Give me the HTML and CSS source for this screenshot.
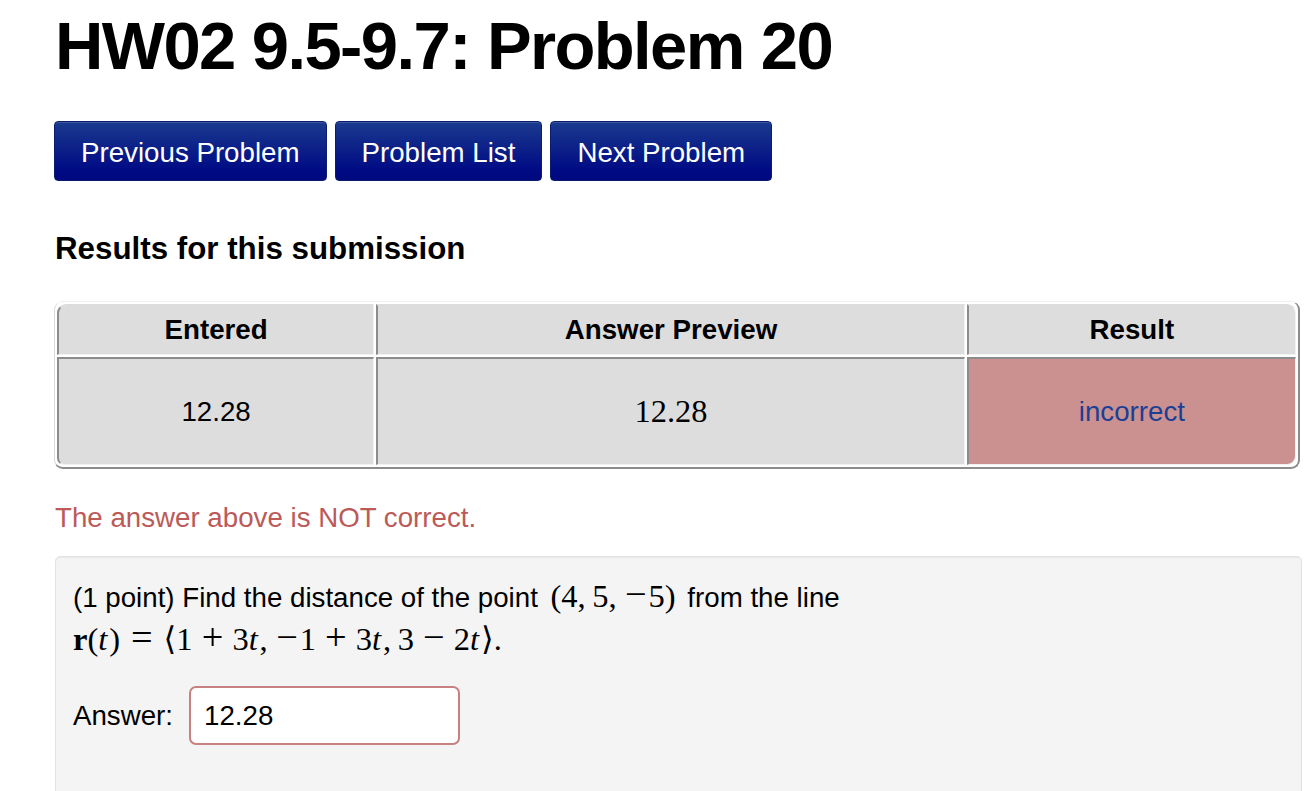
FILE: index.html
```html
<!DOCTYPE html>
<html lang="en">
<head>
<meta charset="utf-8">
<title>HW02 9.5-9.7: Problem 20</title>
<link rel="stylesheet" href="styles.css">
</head>
<body>
<div class="page">
  <h1 class="title">HW02 9.5-9.7: Problem 20</h1>
  <div class="nav">
    <a class="btn btn-prev">Previous Problem</a>
    <a class="btn btn-list">Problem List</a>
    <a class="btn btn-next">Next Problem</a>
  </div>
  <h2 class="results-heading">Results for this submission</h2>
  <table class="results">
    <colgroup>
      <col class="col-entered">
      <col class="col-preview">
      <col class="col-result">
    </colgroup>
    <tr class="head-row">
      <th class="cell first">Entered</th>
      <th class="cell">Answer Preview</th>
      <th class="cell last">Result</th>
    </tr>
    <tr class="data-row">
      <td class="cell first-bottom">12.28</td>
      <td class="cell preview">12.28</td>
      <td class="cell incorrect last-bottom">incorrect</td>
    </tr>
  </table>
  <p class="error-msg">The answer above is NOT correct.</p>
  <div class="problem">
    <p class="statement">(1 point) Find the distance of the point <span class="math inline-math">(4,<span class="thin"></span>5,<span class="thin"></span><span class="op">−</span>5)</span> from the line<br><span class="math"><b>r</b>(<i>t</i>)<span class="op rel">=</span>⟨1<span class="op bin">+</span>3<i>t</i>,<span class="thin"></span><span class="op">−</span>1<span class="op bin">+</span>3<i>t</i>,<span class="thin"></span>3<span class="op bin">−</span>2<i>t</i>⟩.</span></p>
    <div class="answer-row">
      <label class="answer-label">Answer:</label>
      <div class="answer-input">12.28</div>
    </div>
  </div>
</div>
</body>
</html>
```

FILE: styles.css
```css
html, body {
  margin: 0;
  padding: 0;
  background: #ffffff;
}

body {
  font-family: "Liberation Sans", Arial, sans-serif;
  font-size: 27.7px;
  color: #000;
}

.page {
  padding: 0 3px 0 55px;
}

.title {
  margin: 12px 0 0;
  font-size: 67px;
  line-height: 67px;
  letter-spacing: -1.6px;
  font-weight: bold;
}

.nav {
  display: flex;
  gap: 8px;
  margin: 42px 0 0 -1px;
}

.btn {
  display: inline-flex;
  align-items: center;
  height: 60px;
  box-sizing: border-box;
  padding: 3px 26px 0;
  border: 1px solid #0b1d6e;
  border-radius: 4px;
  background: linear-gradient(#1a3a8e, #000a84 85%, #00087c);
  color: #ffffff;
  font-size: 27.7px;
  box-shadow: inset 0 1px 0 rgba(255,255,255,0.15);
}

.results-heading {
  margin: 50px 0 0;
  font-size: 31.3px;
  line-height: 36px;
  font-weight: bold;
}

.results {
  margin: 34px 0 0 -1px;
  width: 1246px;
  table-layout: fixed;
  border-collapse: separate;
  border-spacing: 2px;
  border-top: 1px solid #f0f0f0;
  border-left: 1px solid #d8d8d8;
  border-right: 2px solid #8c8c8c;
  border-bottom: 2px solid #8c8c8c;
  border-radius: 9px;
}

.col-entered { width: 317px; }
.col-preview { width: 588px; }
.col-result { width: 329px; }

.cell {
  box-sizing: border-box;
  background: #dddddd;
  border-top: 2px solid #8c8c8c;
  border-left: 2px solid #8c8c8c;
  border-right: 1px solid #f2f2f2;
  border-bottom: 1px solid #f2f2f2;
  text-align: center;
  padding: 0;
  font-size: 27.7px;
}

.head-row .cell {
  height: 51px;
  font-weight: bold;
  border-top-color: #dddddd;
}

.data-row .cell {
  height: 108px;
  font-weight: normal;
}

.cell.first { border-top-left-radius: 9px; }
.cell.last { border-top-right-radius: 9px; }
.cell.first-bottom { border-bottom-left-radius: 7px; }
.cell.last-bottom { border-bottom-right-radius: 9px; }

.cell.preview {
  font-family: "Liberation Serif", "Times New Roman", serif;
  font-size: 32.4px;
}

.cell.incorrect {
  background: #cb9191;
  color: #1b3f94;
}

.error-msg {
  margin: 32px 0 0;
  line-height: 33px;
  color: #bb5a58;
}

.problem {
  margin-top: 22px;
  min-height: 260px;
  box-sizing: border-box;
  padding: 18px 17px;
  background: #f4f4f4;
  border: 1px solid #e3e3e3;
  border-radius: 5px;
  box-shadow: inset 0 1px 1px rgba(0,0,0,0.05);
}

.statement {
  margin: 0;
  line-height: 40px;
}

.math {
  font-family: "Liberation Serif", "DejaVu Serif", serif;
  font-size: 32.5px;
}

.inline-math {
  margin: 0 4px 0 5px;
}

.math b { font-weight: bold; }
.math i { font-style: italic; padding-right: 0.06em; }

.op {
  display: inline-block;
  width: 25.5px;
  font-size: 1.18em;
  line-height: 1;
  text-align: center;
}

.op.bin { margin: 0 7.2px; }
.op.rel { margin: 0 9px; }

.thin {
  display: inline-block;
  width: 0.2em;
}

.answer-row {
  display: flex;
  align-items: center;
  margin-top: 25px;
  gap: 16px;
}

.answer-input {
  width: 271px;
  height: 59px;
  box-sizing: border-box;
  border: 2px solid #c88080;
  border-radius: 7px;
  background: #ffffff;
  padding: 0 13px;
  display: flex;
  align-items: center;
  font-size: 27.7px;
}
```
